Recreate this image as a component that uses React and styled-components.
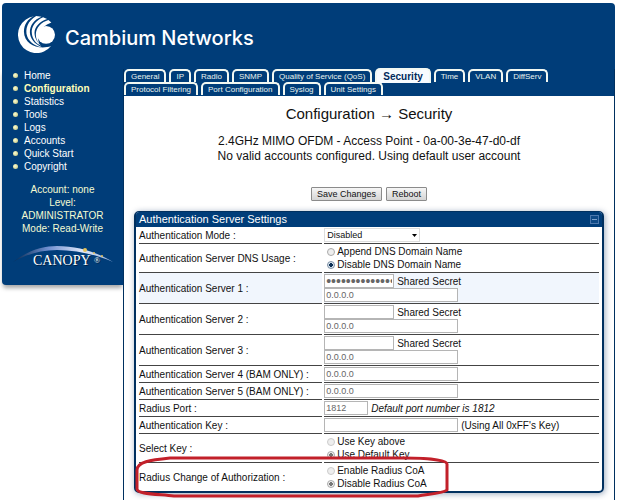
import React, { useState } from "react";
import styled, { createGlobalStyle } from "styled-components";

const menu = [
  "Home",
  "Configuration",
  "Statistics",
  "Tools",
  "Logs",
  "Accounts",
  "Quick Start",
  "Copyright",
];

const tabs = [
  "General",
  "IP",
  "Radio",
  "SNMP",
  "Quality of Service (QoS)",
  "Security",
  "Time",
  "VLAN",
  "DiffServ",
  "Protocol Filtering",
  "Port Configuration",
  "Syslog",
  "Unit Settings",
];

const CambiumMark = () => (
  <svg width="37" height="37" viewBox="0 0 112 112" fill="#fff" aria-hidden="true">
    <path d="M48 1A56 56 0 1 0 100 91C66 104 18 88 18 48C18 26 30 8 48 1Z" />
    <path d="M55 0C30 14 20 40 28 62C35 80 52 92 74 95C48 84 37 68 36 50C35 28 50 10 71 2Z" />
    <path d="M76 4C54 14 39 32 42 54C44 70 54 84 70 90C55 76 50 64 50 50C51 32 66 16 88 9Z" />
    <path d="M92 12C72 18 54 34 54 56C54 66 57 76 64 83C56 60 62 36 101 20Z" />
    <circle cx="85" cy="57" r="27" />
  </svg>
);

const CanopyLogo = () => (
  <svg width="100" height="24" viewBox="0 0 100 24" role="img" aria-label="Canopy">
    <defs>
      <linearGradient id="arc" x1="0" x2="1" y1="0" y2="0">
        <stop offset="0" stopColor="#06284f" />
        <stop offset="0.35" stopColor="#6f8fd0" />
        <stop offset="0.7" stopColor="#dfe8fa" />
        <stop offset="1" stopColor="#8fa9d6" />
      </linearGradient>
    </defs>
    <path d="M0 17C16 5 30 1 44 1C64 1 84 7 100 17C82 9 62 5 44 5C28 5 14 9 0 17Z" fill="url(#arc)" />
    <circle cx="72" cy="5" r="2" fill="#e3c25a" />
    <circle cx="81" cy="8" r="1" fill="#e3c25a" />
    <circle cx="89" cy="11" r="1" fill="#e3c25a" />
    <CanopyText x="20" y="20" fontSize="14">
      CANOPY
    </CanopyText>
    <CanopyText x="81" y="18" fontSize="8">
      ®
    </CanopyText>
  </svg>
);

const Choice = ({ name, options, value, onChange, disabled, labelId }) => (
  <div role="radiogroup" aria-labelledby={labelId}>
    {options.map((option) => (
      <RadioLabel key={option}>
        <Radio
          type="radio"
          name={name}
          checked={value === option}
          disabled={disabled}
          onChange={() => onChange && onChange(option)}
        />
        {option}
      </RadioLabel>
    ))}
  </div>
);

const Server = ({ number, secret, highlight }) => (
  <Row $highlight={highlight}>
    <th scope="row">
      <label htmlFor={`server${number}`}>Authentication Server {number} :</label>
    </th>
    <td>
      <Line>
        <TextBox id={`secret${number}`} type="password" $width={70} defaultValue={secret} />
        <label htmlFor={`secret${number}`}>Shared Secret</label>
      </Line>
      <Line>
        <TextBox id={`server${number}`} defaultValue="0.0.0.0" />
      </Line>
    </td>
  </Row>
);

const App = () => {
  const [dns, setDns] = useState("Disable DNS Domain Name");

  return (
    <>
      <GlobalStyle />
      <Page>
        <Header>
          <CambiumMark />
          <Brand>Cambium Networks</Brand>
        </Header>
        <Columns>
          <Sidebar>
            <Menu>
              {menu.map((item) => (
                <MenuItem key={item}>
                  <MenuLink href="#" $active={item === "Configuration"}>
                    {item}
                  </MenuLink>
                </MenuItem>
              ))}
            </Menu>
            <Account>
              Account: none
              <br />
              Level:
              <br />
              ADMINISTRATOR
              <br />
              Mode: Read-Write
            </Account>
            <CanopyLogo />
          </Sidebar>
          <Content>
            <Tabs>
              {tabs.map((tab) => (
                <Tab href="#" key={tab} $active={tab === "Security"}>
                  {tab}
                </Tab>
              ))}
            </Tabs>
            <Main>
              <Title>Configuration → Security</Title>
              <Status>
                2.4GHz MIMO OFDM - Access Point - 0a-00-3e-47-d0-df
                <br />
                No valid accounts configured. Using default user account
              </Status>
              <Actions>
                <Button type="button">Save Changes</Button>
                <Button type="button">Reboot</Button>
              </Actions>
              <Panel>
                <PanelHeader>
                  <PanelTitle>Authentication Server Settings</PanelTitle>
                  <Collapse type="button" aria-label="Collapse" />
                </PanelHeader>
                <Settings>
                  <tbody>
                    <Row>
                      <th scope="row">
                        <label htmlFor="mode">Authentication Mode :</label>
                      </th>
                      <td>
                        <SelectBox>
                          <Select id="mode" defaultValue="Disabled">
                            <option>Disabled</option>
                          </Select>
                          <svg width="5" height="3" viewBox="0 0 5 3" aria-hidden="true">
                            <path d="M0 0H5L2.500 3Z" fill="#000" />
                          </svg>
                        </SelectBox>
                      </td>
                    </Row>
                    <Row>
                      <th scope="row" id="dns">
                        Authentication Server DNS Usage :
                      </th>
                      <td>
                        <Choice
                          name="dns"
                          labelId="dns"
                          options={["Append DNS Domain Name", "Disable DNS Domain Name"]}
                          value={dns}
                          onChange={setDns}
                        />
                      </td>
                    </Row>
                    <Server number={1} secret="canopycanopyca" highlight />
                    <Server number={2} />
                    <Server number={3} />
                    {[4, 5].map((number) => (
                      <Row key={number}>
                        <th scope="row">
                          <label htmlFor={`server${number}`}>
                            Authentication Server {number} (BAM ONLY) :
                          </label>
                        </th>
                        <td>
                          <Line>
                            <TextBox id={`server${number}`} defaultValue="0.0.0.0" />
                          </Line>
                        </td>
                      </Row>
                    ))}
                    <Row>
                      <th scope="row">
                        <label htmlFor="port">Radius Port :</label>
                      </th>
                      <td>
                        <Line>
                          <TextBox id="port" $width={44} defaultValue="1812" />
                          <em>Default port number is 1812</em>
                        </Line>
                      </td>
                    </Row>
                    <Row>
                      <th scope="row">
                        <label htmlFor="key">Authentication Key :</label>
                      </th>
                      <td>
                        <Line>
                          <TextBox id="key" />
                          <span>(Using All 0xFF's Key)</span>
                        </Line>
                      </td>
                    </Row>
                    <Row>
                      <th scope="row" id="selectKey">
                        Select Key :
                      </th>
                      <td>
                        <Choice
                          name="selectKey"
                          labelId="selectKey"
                          options={["Use Key above", "Use Default Key"]}
                          value="Use Default Key"
                          disabled
                        />
                      </td>
                    </Row>
                    <Row>
                      <th scope="row" id="coa">
                        Radius Change of Authorization :
                      </th>
                      <td>
                        <Choice
                          name="coa"
                          labelId="coa"
                          options={["Enable Radius CoA", "Disable Radius CoA"]}
                          value="Disable Radius CoA"
                          disabled
                        />
                      </td>
                    </Row>
                  </tbody>
                </Settings>
                <Marker width="316" height="42" viewBox="0 0 316 42" aria-hidden="true">
                  <path
                    d="M36 2H270C292 2 313 4 313 8V34C310 37 296 38 284 40H40C22 38 3 38 3 33V14C3 6 16 4 36 2Z"
                    fill="none"
                    stroke="#c2202a"
                    strokeWidth="3"
                    strokeLinejoin="round"
                  />
                </Marker>
              </Panel>
            </Main>
          </Content>
        </Columns>
      </Page>
    </>
  );
};

// Styled Components
const GlobalStyle = createGlobalStyle`
  * {
    box-sizing: border-box;
  }

  body {
    margin: 0;
    background: #fff;
    color: #111;
    font-family: "Liberation Sans", Arial, sans-serif;
    font-size: 10px;
    line-height: 13px;
  }
`;

const Page = styled.div`
  display: flex;
  flex-direction: column;
  height: 100vh;
  overflow: hidden;
  padding: 3px 6px 0 2px;
`;

const Header = styled.header`
  display: flex;
  align-items: center;
  gap: 10px;
  padding: 13px 16px 16px;
  background: #003d79;
  border-radius: 4px 4px 0 0;
`;

const Brand = styled.div`
  padding-top: 6px;
  font-family: Inter, sans-serif;
  font-size: 20px;
  font-weight: 500;
  line-height: 24px;
  color: #fff;
`;

const Columns = styled.div`
  display: flex;
  align-items: flex-start;
  flex: 1;
`;

const Sidebar = styled.nav`
  display: flex;
  flex-direction: column;
  align-items: center;
  gap: 10px;
  width: 121px;
  padding-bottom: 16px;
  background: #003d79;
  border-radius: 0 0 0 4px;
  box-shadow: 0 4px 4px -1px rgba(0, 0, 0, 0.35);
`;

const Menu = styled.ul`
  align-self: stretch;
  list-style: none;
  margin: 0;
  padding: 0 11px;
`;

const MenuItem = styled.li`
  display: flex;
  align-items: center;
  gap: 6px;

  &::before {
    content: "";
    width: 5px;
    height: 5px;
    border-radius: 50%;
    background: radial-gradient(circle at 40% 40%, #ffffd0, #b9bd7c);
  }
`;

const MenuLink = styled.a`
  color: ${(props) => (props.$active ? "#ffffb8" : "#fff")};
  font-weight: ${(props) => (props.$active ? "bold" : "normal")};
  text-decoration: none;
`;

const Account = styled.p`
  margin: 0;
  color: #f4fbd2;
  text-align: center;
`;

const CanopyText = styled.text`
  fill: #fff;
  font-family: "Liberation Serif", serif;
  text-shadow: 1px 1px 0 #02203f;
`;

const Content = styled.div`
  display: flex;
  flex-direction: column;
  flex: 1;
  align-self: stretch;
  border: solid #00305f;
  border-width: 0 1px;
`;

const Tabs = styled.div`
  display: flex;
  flex-wrap: wrap;
  column-gap: 3px;
  padding-bottom: 1px;
  background: #003d79;
`;

const Tab = styled.a`
  position: relative;
  padding: 0 ${(props) => (props.$active ? 6 : 5)}px;
  margin: ${(props) => (props.$active ? "-1px 0" : 0)};
  z-index: ${(props) => (props.$active ? 1 : 0)};
  border: solid #f2f8f2;
  border-width: 2px 2px 0;
  border-radius: 5px 5px 0 0;
  background: ${(props) => (props.$active ? "#f7fbff" : "#003d79")};
  color: ${(props) => (props.$active ? "#002a5c" : "#e9f3ee")};
  font-size: ${(props) => (props.$active ? 10 : 8)}px;
  font-weight: ${(props) => (props.$active ? "bold" : "normal")};
  line-height: ${(props) => (props.$active ? 13 : 11)}px;
  text-decoration: none;
`;

const Main = styled.main`
  flex: 1;
  padding: 9px 10px 0;
  background: #fff;
`;

const Title = styled.h1`
  margin: 0 0 11px;
  font-size: 15px;
  font-weight: normal;
  line-height: 18px;
  text-align: center;
`;

const Status = styled.p`
  margin: 0 0 23px;
  font-size: 12px;
  line-height: 15px;
  text-align: center;
`;

const Actions = styled.div`
  display: flex;
  justify-content: center;
  gap: 4px;
  margin-bottom: 10px;
`;

const Button = styled.button`
  height: 14px;
  padding: 0 5px;
  border: 1px solid #8b8b8b;
  border-radius: 1px;
  background: linear-gradient(#f6f6f6, #d4d4d4);
  color: #111;
  font-family: inherit;
  font-size: 9px;
  line-height: 12px;
`;

const Panel = styled.section`
  position: relative;
  border: solid #00305f;
  border-width: 1px 2px 2px;
  border-radius: 5px;
  box-shadow: 1px 1px 6px rgba(0, 40, 90, 0.4);
`;

const PanelHeader = styled.div`
  display: flex;
  align-items: center;
  justify-content: space-between;
  height: 15px;
  padding: 0 3px;
  background: #003d79;
  border-radius: 3px 3px 0 0;
`;

const PanelTitle = styled.h2`
  margin: 0;
  color: #fff;
  font-size: 11px;
  font-weight: normal;
`;

const Collapse = styled.button`
  display: flex;
  align-items: center;
  width: 9px;
  height: 9px;
  padding: 0 1px;
  border: 1px solid #4c78ad;
  background: #0f4a86;

  &::before {
    content: "";
    flex: 1;
    height: 1px;
    background: #7fa3cc;
  }
`;

const Settings = styled.table`
  width: 100%;
  table-layout: fixed;
  padding: 0 1px;
  border-spacing: 2px 0;
`;

const Row = styled.tr`
  th,
  td {
    padding: 1px 0;
    border-bottom: 1px solid #444;
    background: ${(props) => (props.$highlight ? "#f1f6fd" : "#fff")};
    font-weight: normal;
    text-align: left;
    vertical-align: middle;
  }

  th {
    width: 40%;
  }

  &:last-child th,
  &:last-child td {
    border-bottom: 0;
  }
`;

const Line = styled.div`
  display: flex;
  align-items: center;
  gap: 3px;
`;

const TextBox = styled.input`
  width: ${(props) => props.$width || 134}px;
  height: 14px;
  padding: 0 1px;
  border: 1px solid #b5b5b5;
  background: #fff;
  color: #666;
  font-family: inherit;
  font-size: 9px;

  &[type="password"] {
    font-size: 14px;
    line-height: 12px;
  }
`;

const SelectBox = styled.div`
  display: flex;
  align-items: center;
  width: 96px;
  height: 14px;
  padding-right: 2px;
  border: 1px solid #ddd;
  background: #fff;
`;

const Select = styled.select`
  appearance: none;
  flex: 1;
  height: 12px;
  padding: 0 2px;
  border: 0;
  background: none;
  color: #111;
  font-family: inherit;
  font-size: 9px;
`;

const RadioLabel = styled.label`
  display: flex;
  align-items: center;
  gap: 2px;
  padding-left: 3px;
`;

const Radio = styled.input`
  appearance: none;
  width: 8px;
  height: 8px;
  margin: 0;
  border: 1px solid #aaa;
  border-radius: 50%;
  background: #eee;

  &:checked {
    border-color: #7d8fa3;
    background: radial-gradient(circle, #0b2f55 0 2px, #dbe6f0 2px);
  }

  &:disabled {
    border-color: #ccc;
  }

  &:disabled:checked {
    border-color: #aaa;
    background: radial-gradient(circle, #777 0 2px, #eee 2px);
  }
`;

const Marker = styled.svg`
  position: absolute;
  left: -2px;
  bottom: -7px;
  pointer-events: none;
`;

export default App;
